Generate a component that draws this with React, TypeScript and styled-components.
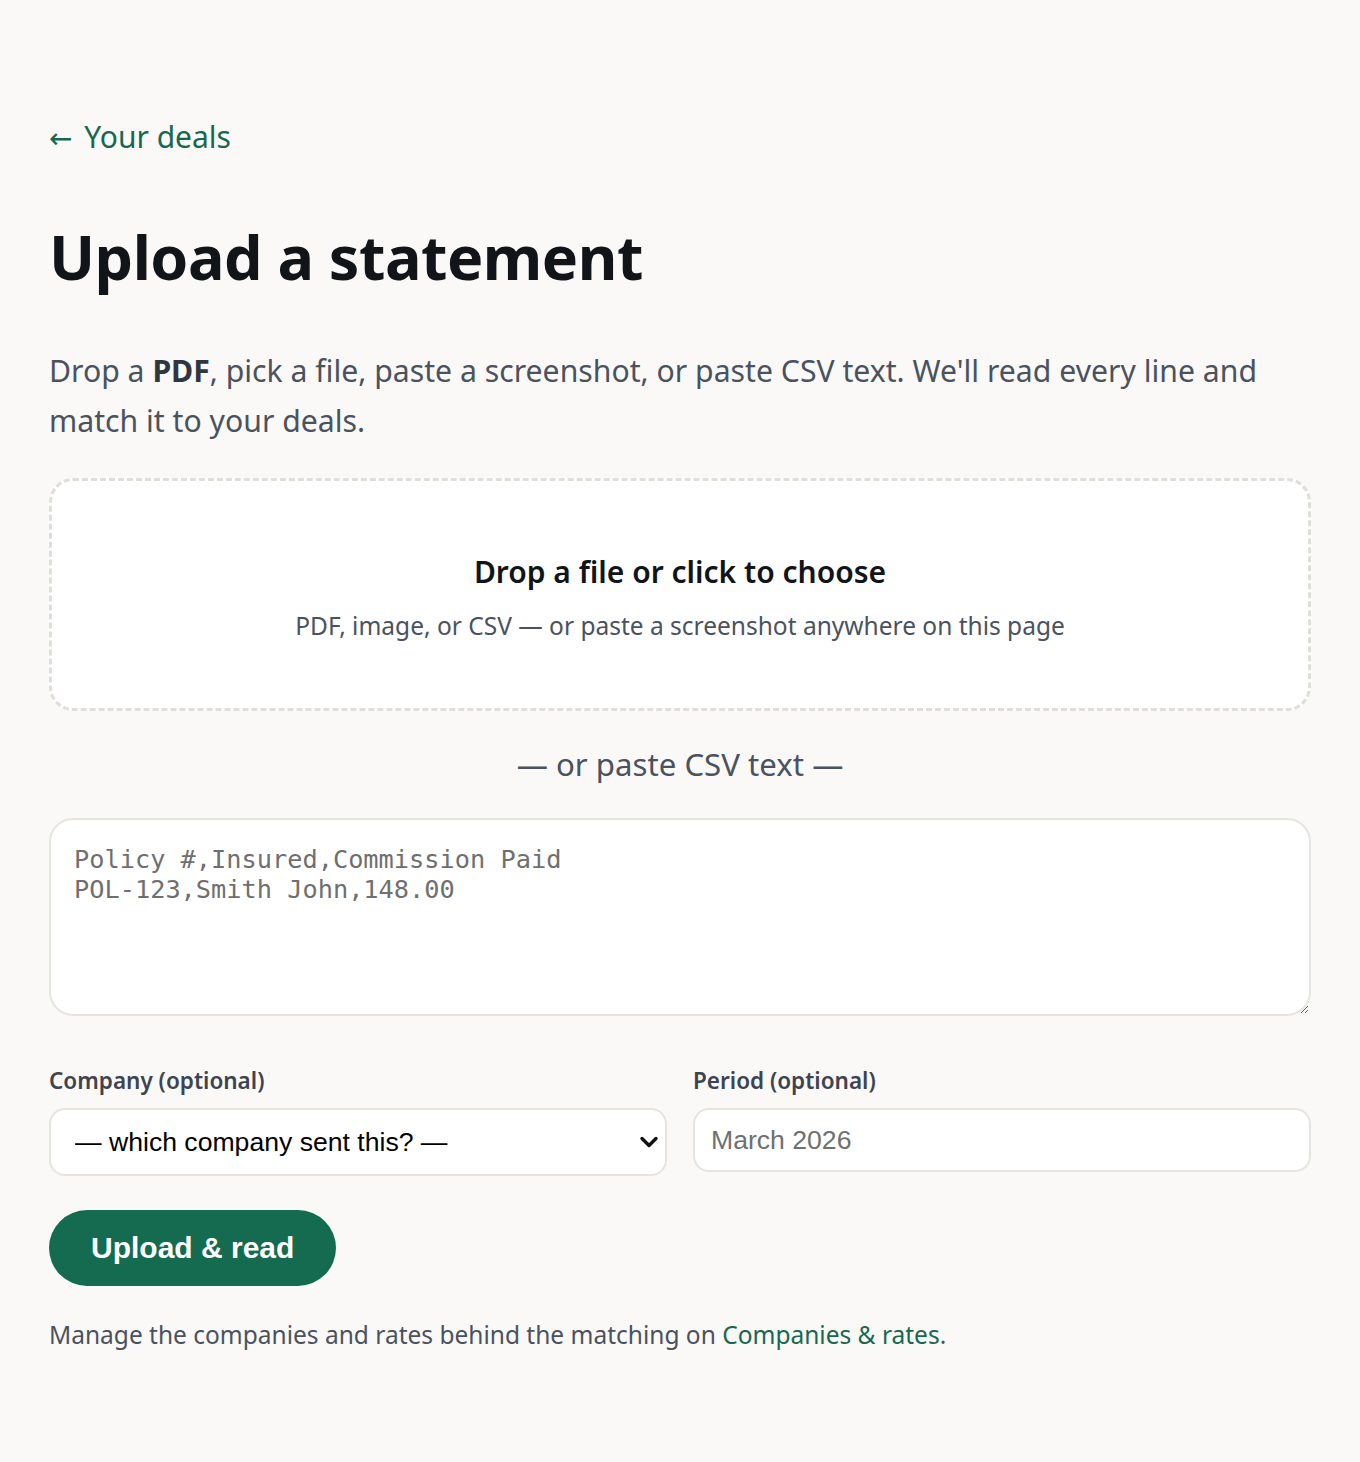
import styled, { createGlobalStyle } from 'styled-components';

const GlobalStyle = createGlobalStyle`
  html, body {
    margin: 0;
    padding: 0;
    background: #faf9f7;
  }
  body {
    font-family: "Noto Sans", "Open Sans", sans-serif;
    color: #111418;
  }
  * {
    box-sizing: border-box;
  }
`;

export default function App() {
  return (
    <>
      <GlobalStyle />
      <Page>
        <BackLink href="#">
          <Arrow>←</Arrow> Your deals
        </BackLink>
        <Title>Upload a statement</Title>
        <Intro>
          Drop a <strong>PDF</strong>, pick a file, paste a screenshot, or paste CSV text. We'll read every line and
          match it to your deals.
        </Intro>

        <DropZone>
          <DropTitle>Drop a file or click to choose</DropTitle>
          <DropHint>PDF, image, or CSV — or paste a screenshot anywhere on this page</DropHint>
        </DropZone>

        <Divider>— or paste CSV text —</Divider>

        <CsvArea placeholder={'Policy #,Insured,Commission Paid\nPOL-123,Smith John,148.00'} />

        <FieldGrid>
          <Field>
            <Label>Company (optional)</Label>
            <SelectWrap>
              <Select defaultValue="">
                <option value="">— which company sent this? —</option>
              </Select>
              <Chevron width="20" height="14" viewBox="0 0 20 14" aria-hidden="true">
                <path d="M3 3.5 L10 10.5 L17 3.5" fill="none" stroke="#111" strokeWidth="3.4" strokeLinecap="round" strokeLinejoin="round" />
              </Chevron>
            </SelectWrap>
          </Field>
          <Field>
            <Label>Period (optional)</Label>
            <TextInput placeholder="March 2026" />
          </Field>
        </FieldGrid>

        <SubmitButton type="button">Upload &amp; read</SubmitButton>

        <Footnote>
          Manage the companies and rates behind the matching on <InlineLink href="#">Companies &amp; rates</InlineLink>.
        </Footnote>
      </Page>
    </>
  );
}

const Page = styled.main`
  display: flex;
  flex-direction: column;
  align-items: stretch;
  padding: 116px 49px 100px 49px;
  min-height: 1462px;
`;

const BackLink = styled.a`
  align-self: flex-start;
  font-size: 30px;
  line-height: 42px;
  color: #17684f;
  text-decoration: none;
`;

const Arrow = styled.span`
  font-family: "DejaVu Sans", sans-serif;
  font-size: 28px;
  margin-right: 4px;
`;

const Title = styled.h1`
  margin: 57px 0 0;
  font-size: 61px;
  line-height: 80px;
  font-weight: 700;
  color: #111418;
  letter-spacing: -0.5px;
`;

const Intro = styled.p`
  margin: 49px 0 0;
  font-size: 30.2px;
  line-height: 50px;
  color: #4a5260;

  strong {
    color: #2f3640;
    font-weight: 700;
  }
`;

const DropZone = styled.div`
  margin-top: 32px;
  height: 233px;
  padding-top: 4px;
  display: flex;
  flex-direction: column;
  align-items: center;
  justify-content: center;
  gap: 16px;
  background: #ffffff;
  border: 3px dashed #e0ded9;
  border-radius: 24px;
  cursor: pointer;
`;

const DropTitle = styled.div`
  font-size: 30px;
  line-height: 42px;
  font-weight: 600;
  color: #111418;
`;

const DropHint = styled.div`
  font-size: 24.5px;
  line-height: 34px;
  color: #4a5260;
`;

const Divider = styled.div`
  margin-top: 31px;
  text-align: center;
  font-size: 31.2px;
  line-height: 44px;
  color: #4a5260;
`;

const CsvArea = styled.textarea`
  margin-top: 32px;
  height: 198px;
  width: 100%;
  padding: 25px 23px;
  font-family: "DejaVu Sans Mono", "Liberation Mono", monospace;
  font-size: 25.3px;
  line-height: 30px;
  color: #111418;
  background: #ffffff;
  border: 2px solid #e6e4e0;
  border-radius: 24px;
  resize: vertical;
  outline: none;

  &::placeholder {
    color: #6f6f6f;
  }
`;

const FieldGrid = styled.div`
  margin-top: 49px;
  display: grid;
  grid-template-columns: 1fr 1fr;
  gap: 26px;
  align-items: start;
`;

const Field = styled.label`
  display: flex;
  flex-direction: column;
  gap: 11px;
`;

const Label = styled.span`
  font-size: 22.5px;
  line-height: 32px;
  font-weight: 600;
  color: #3d4450;
`;

const SelectWrap = styled.div`
  position: relative;
`;

const Select = styled.select`
  appearance: none;
  display: block;
  height: 68px;
  width: 100%;
  padding: 0 48px 0 24px;
  font-family: "Liberation Sans", Arial, sans-serif;
  font-size: 26.6px;
  color: #000000;
  background: #ffffff;
  border: 2px solid #e6e4e0;
  border-radius: 16px;
  outline: none;
`;

const Chevron = styled.svg`
  position: absolute;
  right: 8px;
  top: 27px;
  pointer-events: none;
`;

const TextInput = styled.input`
  height: 64px;
  width: 100%;
  padding: 0 16px;
  font-family: "Liberation Sans", Arial, sans-serif;
  font-size: 26.6px;
  color: #000000;
  background: #ffffff;
  border: 2px solid #e6e4e0;
  border-radius: 16px;
  outline: none;

  &::placeholder {
    color: #707070;
  }
`;

const SubmitButton = styled.button`
  margin-top: 34px;
  align-self: flex-start;
  height: 76px;
  padding: 0 42px;
  font-family: "Liberation Sans", Arial, sans-serif;
  font-size: 30px;
  font-weight: 700;
  color: #ffffff;
  background: #146b50;
  border: none;
  border-radius: 999px;
  cursor: pointer;
`;

const Footnote = styled.p`
  margin: 32px 0 0;
  font-size: 24.5px;
  line-height: 34px;
  color: #4a5260;
`;

const InlineLink = styled.a`
  color: #17684f;
  text-decoration: none;
`;
